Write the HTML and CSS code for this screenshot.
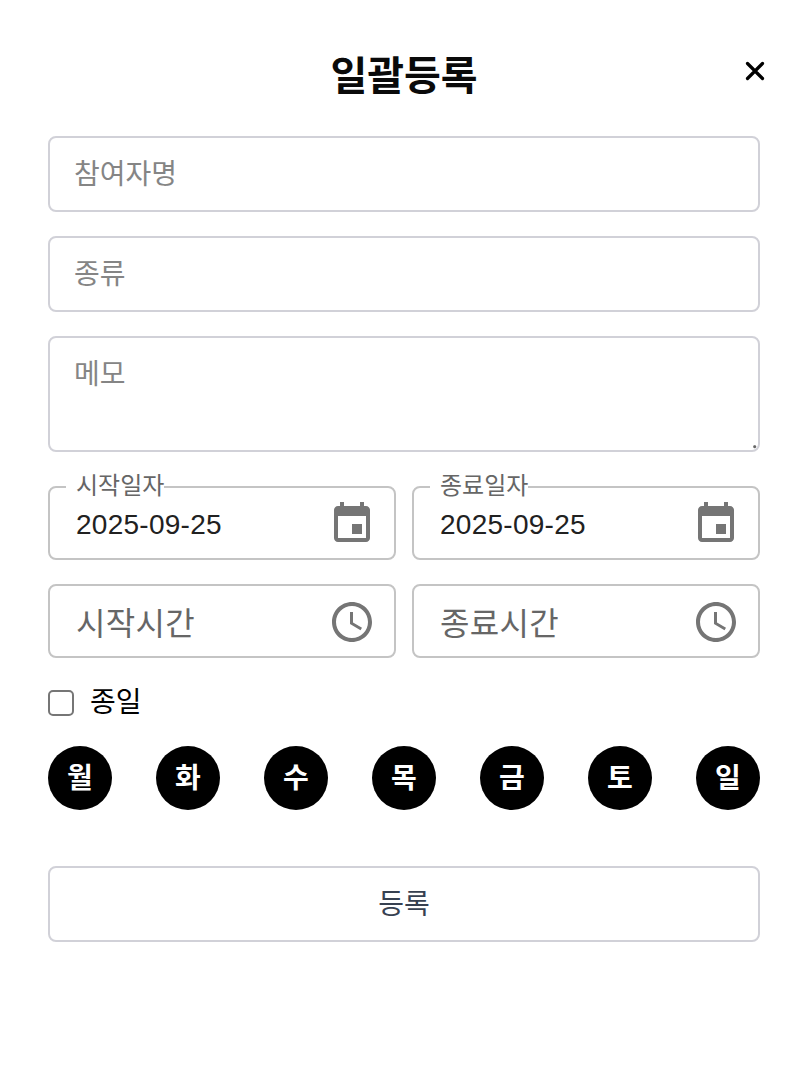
FILE: index.html
```html
<!DOCTYPE html>
<html lang="ko">

<head>
    <meta charset="UTF-8">
    <meta name="viewport" content="width=device-width, initial-scale=1.0">
    <title>일괄등록</title>
    <link rel="stylesheet" href="styles.css">
</head>

<body>
    <header class="header">
        <h1 class="title">일괄등록</h1>
        <button type="button" class="close" aria-label="닫기">
            <svg viewBox="0 0 20 20"><path d="M2.5 2.5l15 15M17.500 2.500l-15 15" /></svg>
        </button>
    </header>

    <form class="form">
        <input type="text" class="input" placeholder="참여자명">
        <input type="text" class="input" placeholder="종류">
        <textarea class="input memo" placeholder="메모"></textarea>

        <div class="row dates">
            <fieldset class="picker">
                <legend>시작일자</legend>
                <span class="value">2025-09-25</span>
                <svg class="icon" viewBox="0 0 24 24"><path d="M17 12h-5v5h5v-5zM16 1v2H8V1H6v2H5c-1.11 0-1.99.9-1.99 2L3 19c0 1.1.89 2 2 2h14c1.1 0 2-.9 2-2V5c0-1.1-.9-2-2-2h-1V1h-2zm3 18H5V8h14v11z" /></svg>
            </fieldset>
            <fieldset class="picker">
                <legend>종료일자</legend>
                <span class="value">2025-09-25</span>
                <svg class="icon" viewBox="0 0 24 24"><path d="M17 12h-5v5h5v-5zM16 1v2H8V1H6v2H5c-1.11 0-1.99.9-1.99 2L3 19c0 1.1.89 2 2 2h14c1.1 0 2-.9 2-2V5c0-1.1-.9-2-2-2h-1V1h-2zm3 18H5V8h14v11z" /></svg>
            </fieldset>
        </div>

        <div class="row times">
            <div class="picker">
                <span class="label">시작시간</span>
                <svg class="icon" viewBox="0 0 24 24"><path d="M11.99 2C6.47 2 2 6.48 2 12s4.47 10 9.99 10C17.52 22 22 17.52 22 12S17.52 2 11.99 2zM12 20c-4.42 0-8-3.58-8-8s3.58-8 8-8 8 3.58 8 8-3.58 8-8 8z" /><path d="M12.5 7H11v6l5.25 3.15.75-1.23-4.5-2.67z" /></svg>
            </div>
            <div class="picker">
                <span class="label">종료시간</span>
                <svg class="icon" viewBox="0 0 24 24"><path d="M11.99 2C6.47 2 2 6.48 2 12s4.47 10 9.99 10C17.52 22 22 17.52 22 12S17.52 2 11.99 2zM12 20c-4.42 0-8-3.58-8-8s3.58-8 8-8 8 3.58 8 8-3.58 8-8 8z" /><path d="M12.5 7H11v6l5.25 3.15.75-1.23-4.5-2.67z" /></svg>
            </div>
        </div>

        <label class="allday">
            <input type="checkbox" class="check">
            <span>종일</span>
        </label>

        <div class="days">
            <button type="button" class="day">월</button>
            <button type="button" class="day">화</button>
            <button type="button" class="day">수</button>
            <button type="button" class="day">목</button>
            <button type="button" class="day">금</button>
            <button type="button" class="day">토</button>
            <button type="button" class="day">일</button>
        </div>

        <button type="submit" class="submit">등록</button>
    </form>
</body>

</html>
```
FILE: styles.css
```css
* {
    box-sizing: border-box;
}

body {
    margin: 0;
    padding: 48px;
    background-color: #fff;
    color: #000;
    font-family: "Liberation Sans", "Noto Sans CJK KR", sans-serif;
    font-size: 28px;
}

button,
input,
textarea {
    font-family: inherit;
    font-size: inherit;
}

.header {
    display: grid;
    grid-template-columns: 1fr auto 1fr;
    height: 88px;
}

.title {
    grid-column: 2;
    margin: 0;
    font-size: 40px;
    line-height: 56px;
    color: #0a0a0a;
}

.close {
    justify-self: end;
    width: 20px;
    height: 20px;
    margin: 13px -5px 0 0;
    padding: 0;
    border: none;
    background: none;
}

.close svg {
    display: block;
    fill: none;
    stroke: #000;
    stroke-width: 3.2;
    stroke-linecap: round;
}

.form {
    display: flex;
    flex-direction: column;
}

.input {
    width: 100%;
    height: 76px;
    margin: 0 0 24px;
    padding: 18px 24px 16px;
    border: 2px solid #d1d1d8;
    border-radius: 8px;
    line-height: 40px;
    outline: none;
}

.input::placeholder {
    color: #858585;
}

.memo {
    height: 116px;
    margin-bottom: 18px;
    padding-top: 17px;
    overflow: hidden;
}

/* small grip in the corner instead of the default one */
.memo::-webkit-resizer {
    background: radial-gradient(circle at 78% 78%, #666 1px, transparent 2px);
}

.row {
    display: grid;
    grid-template-columns: 1fr 1fr;
    gap: 16px;
}

.picker {
    display: flex;
    align-items: center;
    justify-content: space-between;
    height: 74px;
    min-width: 0;
    margin: 0;
    padding: 0 18px 0 26px;
    border: 2px solid #c4c4c4;
    border-radius: 8px;
}

.dates .picker {
    height: 90px;
    padding-left: 16px;
}

.picker legend {
    height: 34px;
    padding: 0 0 0 10px;
    font-size: 24px;
    line-height: 32px;
    color: #666;
}

.dates .value {
    margin-top: -12px;
    padding-left: 10px;
    letter-spacing: 0.00938em;
    color: #212121;
}

.label {
    font-size: 32px;
    letter-spacing: 0.00938em;
    color: #666;
}

.icon {
    width: 48px;
    height: 48px;
    fill: #757575;
}

.dates .icon {
    margin-top: -14px;
}

.times {
    margin-top: 24px;
}

.times .icon {
    margin-top: 2px;
}

.allday {
    display: flex;
    align-items: center;
    gap: 16px;
    height: 40px;
    margin: 24px 0;
    line-height: 36px;
}

.allday span {
    margin-top: 1px;
}

.check {
    appearance: none;
    width: 26px;
    height: 26px;
    margin: 2px 0 0;
    border: 2px solid #767676;
    border-radius: 5px;
}

.days {
    display: flex;
    justify-content: space-between;
}

.day {
    width: 64px;
    height: 64px;
    padding: 0 0 4px;
    border: none;
    border-radius: 50%;
    background-color: #000;
    color: #fff;
    font-weight: bold;
}

.submit {
    height: 76px;
    margin-top: 56px;
    padding: 0 0 4px;
    border: 2px solid #d1d1d8;
    border-radius: 8px;
    background-color: #fff;
    color: #374151;
}
```
